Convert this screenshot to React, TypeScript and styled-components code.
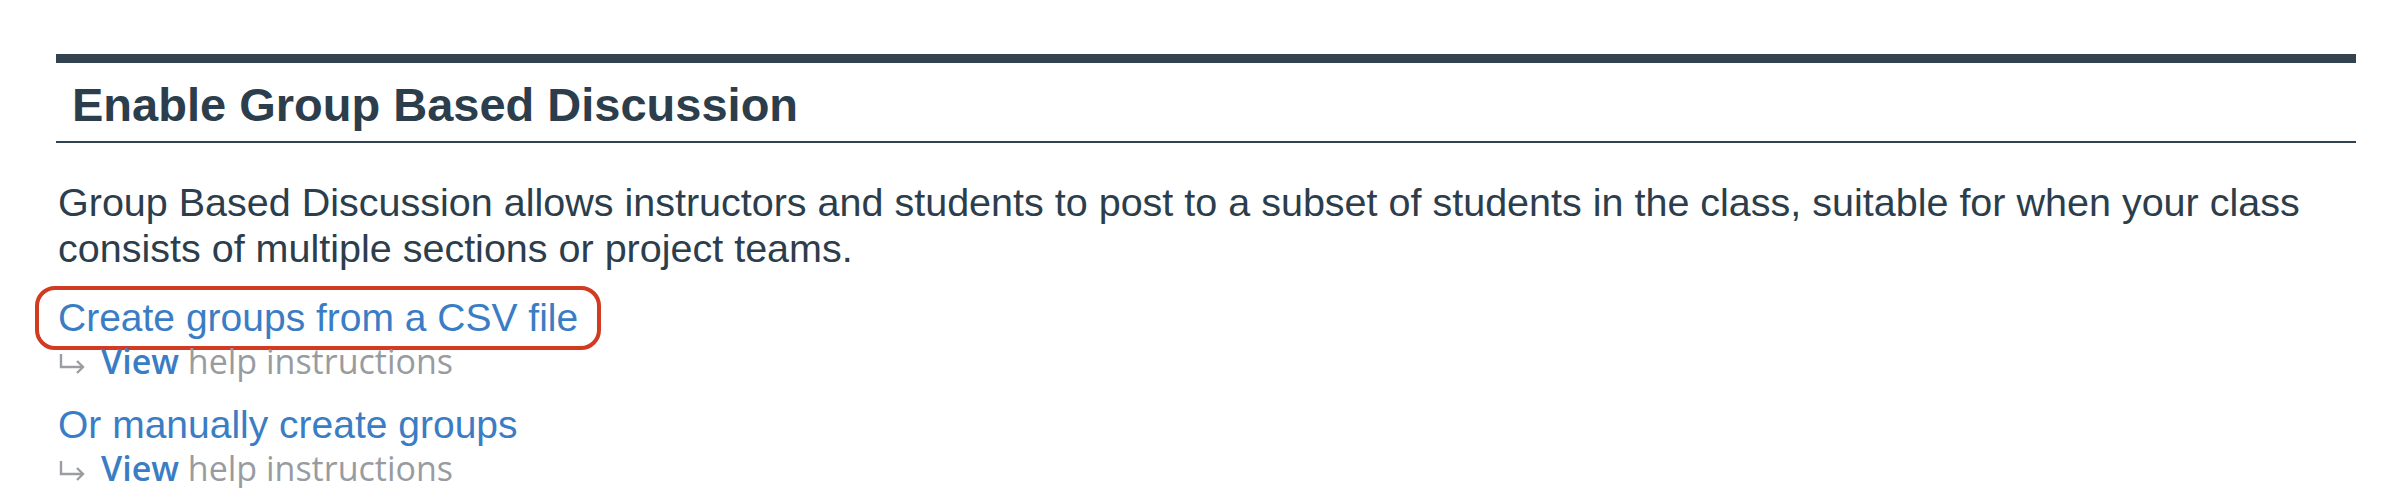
import React from "react";
import styled, { createGlobalStyle } from "styled-components";

const GlobalStyle = createGlobalStyle`
  html, body {
    margin: 0;
    padding: 0;
    background: #ffffff;
  }
  body {
    font-family: "Helvetica Neue", "Liberation Sans", Arial, sans-serif;
    color: #2c3e4c;
  }
`;

const Page = styled.div`
  padding: 54px 50px 0 56px;
`;

const Section = styled.section`
  border-top: 9px solid #32434f;
`;

const Heading = styled.h2`
  margin: 0;
  padding: 15px 16px 9px;
  font-family: "Helvetica Neue", "Liberation Sans", Arial, sans-serif;
  font-size: 47px;
  line-height: 54px;
  font-weight: 700;
  color: #2c3e4c;
  border-bottom: 2px solid #32434f;
`;

const Body = styled.div`
  padding-left: 2px;
`;

const Intro = styled.p`
  margin: 36px 0 24px;
  font-size: 39.5px;
  line-height: 46px;
  color: #2c3e4c;
`;

const Item = styled.div`
  & + & {
    margin-top: 21px;
  }
`;

const LinkLine = styled.div`
  font-size: 39px;
  line-height: 46px;
`;

const Highlight = styled.span<{ $active?: boolean }>`
  display: inline-block;
  border: 4px solid ${(p) => (p.$active ? "#d23a21" : "transparent")};
  border-radius: 20px;
  padding: 5px 19px;
  margin: -9px -23px;
`;

const Link = styled.a`
  color: #3b7dc4;
  text-decoration: none;
  cursor: pointer;
`;

const HelpLine = styled.div`
  font-family: "Open Sans", "DejaVu Sans", sans-serif;
  font-size: 34px;
  line-height: 40px;
  color: #989ca1;
`;

const ArrowIcon = styled.svg`
  width: 28px;
  height: 22px;
  margin-right: 15px;
  vertical-align: -1px;
  color: #9a9ea3;
`;

const HelpLink = styled.a`
  color: #3b7dc4;
  font-weight: 600;
  text-decoration: none;
  cursor: pointer;
`;

type Option = { label: string; highlighted?: boolean };

const options: Option[] = [
  { label: "Create groups from a CSV file", highlighted: true },
  { label: "Or manually create groups" },
];

function ReturnArrow() {
  return (
    <ArrowIcon viewBox="0 0 28 22" fill="none" stroke="currentColor" strokeWidth={2.4}>
      <path d="M3 1 V14 H25" />
      <path d="M19 8 L25 14 L19 20" />
    </ArrowIcon>
  );
}

export default function App() {
  return (
    <>
      <GlobalStyle />
      <Page>
        <Section>
          <Heading>Enable Group Based Discussion</Heading>
          <Body>
            <Intro>
              Group Based Discussion allows instructors and students to post to a subset of
              students in the class, suitable for when your class consists of multiple sections
              or project teams.
            </Intro>
            {options.map((o) => (
              <Item key={o.label}>
                <LinkLine>
                  <Highlight $active={o.highlighted}>
                    <Link>{o.label}</Link>
                  </Highlight>
                </LinkLine>
                <HelpLine>
                  <ReturnArrow />
                  <HelpLink>View</HelpLink> help instructions
                </HelpLine>
              </Item>
            ))}
          </Body>
        </Section>
      </Page>
    </>
  );
}
